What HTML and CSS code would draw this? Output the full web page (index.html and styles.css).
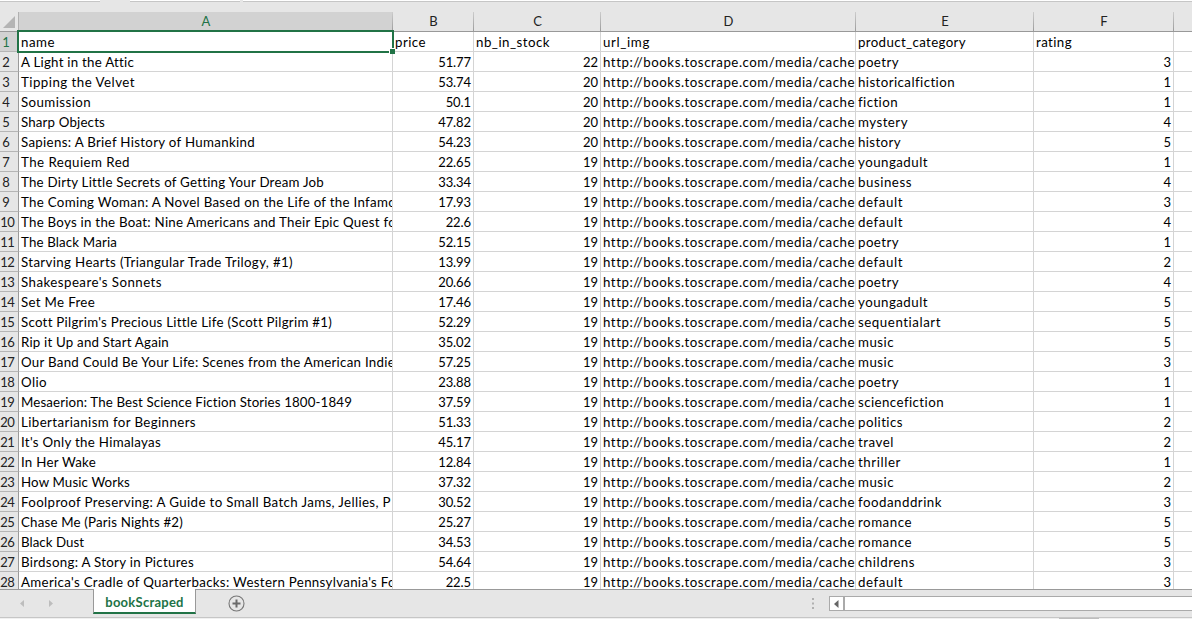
FILE: index.html
```
<!DOCTYPE html>
<html lang="en">
<head>
<meta charset="utf-8">
<title>bookScraped</title>
<link rel="stylesheet" href="styles.css">
</head>
<body>
<div class="app">
  <div class="formula-strip"><span class="name-box"></span><span class="fx-buttons"></span><span class="formula-input"></span></div>
  <div class="sheet">
    <div class="row letters">
      <div class="corner"><svg width="12" height="12" viewBox="0 0 12 12"><path d="M12 0V12H0Z" fill="#b4b4b4"/></svg></div>
      <div class="letter active">A</div><div class="letter">B</div><div class="letter">C</div><div class="letter">D</div><div class="letter">E</div><div class="letter">F</div><div class="letter"></div>
    </div>
    <div class="rows" id="rows"></div>
    <div class="selection"><span class="fill-handle"></span></div>
  </div>
  <div class="tabbar">
    <svg class="nav" width="40" height="9" viewBox="0 0 40 9"><path d="M5 1V8L1 4.500Z M30 1V8L34 4.500Z" fill="#bdbdbd"/></svg>
    <div class="tab">bookScraped</div>
    <svg class="add" width="17" height="17" viewBox="0 0 17 17"><circle cx="8.500" cy="8.500" r="7.500" fill="none" stroke="#777" stroke-width="1.100"/><path d="M8.500 4.500V12.500M4.500 8.500H12.500" stroke="#6a6a6a" stroke-width="2"/></svg>
    <svg class="grip" width="2" height="11" viewBox="0 0 2 11"><path d="M0 0H2V2H0ZM0 4.500H2V6.500H0ZM0 9H2V11H0Z" fill="#b0b0b0"/></svg>
    <div class="scrollbar"><div class="scroll-left"><svg width="5" height="8" viewBox="0 0 5 8"><path d="M4.500 0V8L0 4Z" fill="#666"/></svg></div></div>
  </div>
  <div class="statusbar"><span class="status-mark"></span></div>
</div>
<script src="rows.js"></script>
</body>
</html>
```
FILE: styles.css
```
* { box-sizing: border-box; }
body { margin: 0; font: 13px/20px Lato, "Noto Sans", sans-serif; color: #000; overflow: hidden; }
.app { width: 1192px; height: 619px; display: flex; flex-direction: column; background: #e6e6e6; overflow: hidden; }
.formula-strip { height: 12px; display: flex; align-items: flex-start; flex: none; }
.formula-strip span { height: 2px; background: #fff; border-bottom: 1px solid #c6c6c6; }
.name-box { width: 100px; margin-right: 30px; }
.fx-buttons { width: 110px; margin-right: 3px; }
.formula-input { flex: 1; }
.sheet { position: relative; height: 577px; flex: none; overflow: hidden; background: #fff; }
.row { display: grid; grid-template-columns: 19px 374px 81px 127px 255px 178px 140px 19px; height: 20px; }
.letters { background: #e6e6e6; border-bottom: 1px solid #999; }
.corner { display: flex; justify-content: flex-end; padding: 4px 3px 0 0; border-right: 1px solid #b0b0b0; }
.letter { text-align: center; line-height: 19px; padding-left: 1px; border-right: 1px solid; border-image: linear-gradient(#cfcfcf, #999) 1; color: #222; }
.letter:last-child { border: 0; }
.letter.active { background: #d2d2d2; color: #217346; }
.cell { border-right: 1px solid #d4d4d4; border-bottom: 1px solid #d4d4d4; padding: 0 0 0 2px; line-height: 21px; white-space: nowrap; overflow: hidden; font-size: 13.300px; font-variant-ligatures: none; }
.cell.number { text-align: right; padding-right: 2px; font-size: 13px; letter-spacing: -0.080px; }
.cell.blank { border-right: 0; }
.row-number { background: #e6e6e6; border-right: 1px solid #999; border-bottom: 1px solid #b5b5b5; text-align: right; padding-right: 4px; line-height: 21px; color: #222; letter-spacing: -0.700px; overflow: hidden; }
.row-number.single { padding-right: 9px; }
.row-number.active { background: #d2d2d2; color: #217346; }
.selection { position: absolute; left: 17px; top: 18px; width: 377px; height: 23px; border: 2px solid #217346; }
.fill-handle { position: absolute; right: -3px; bottom: -3px; width: 6px; height: 6px; background: #217346; border-left: 1px solid #fff; border-top: 1px solid #fff; }
.tabbar { height: 28px; flex: none; display: flex; align-items: flex-start; border-top: 1px solid #999; }
.nav { margin: 9px 34px 0 19px; }
.tab { width: 103px; height: 25px; margin-top: -1px; background: #fff; border: 1px solid #999; border-top: 0; border-bottom: 2px solid #217346; color: #217346; font-weight: 700; letter-spacing: 0.250px; text-align: center; line-height: 27px; }
.add { margin: 5px 0 0 32px; }
.grip { margin: 8px 0 0 567px; }
.scrollbar { margin: 6px 0 0 15px; flex: 1; height: 15px; background: #fff; border: 1px solid #aaa; border-right: 0; }
.scroll-left { width: 15px; height: 13px; border-right: 2px solid #aaa; display: flex; align-items: center; justify-content: center; }
.statusbar { height: 2px; border-top: 1px solid #c6c6c6; background: #f0f0f0; display: flex; }
.status-mark { width: 40px; height: 1px; margin-left: 1059px; background: #bdbdbd; }
```
FILE: rows.js
```
// name, width of the name, price, stock, category, rating
const books = [
  ["A Light in the Attic", 113, "51.77", 22, "poetry", 3],
  ["Tipping the Velvet", 114, "53.74", 20, "historicalfiction", 1],
  ["Soumission", 70, "50.1", 20, "fiction", 1],
  ["Sharp Objects", 84, "47.82", 20, "mystery", 4],
  ["Sapiens: A Brief History of Humankind", 234, "54.23", 20, "history", 5],
  ["The Requiem Red", 109, "22.65", 19, "youngadult", 1],
  ["The Dirty Little Secrets of Getting Your Dream Job", 303, "33.34", 19, "business", 4],
  ["The Coming Woman: A Novel Based on the Life of the Infamo", 375, "17.93", 19, "default", 3],
  ["The Boys in the Boat: Nine Americans and Their Epic Quest fo", 375, "22.6", 19, "default", 4],
  ["The Black Maria", 96, "52.15", 19, "poetry", 1],
  ["Starving Hearts (Triangular Trade Trilogy, #1)", 272, "13.99", 19, "default", 2],
  ["Shakespeare's Sonnets", 141, "20.66", 19, "poetry", 4],
  ["Set Me Free", 74, "17.46", 19, "youngadult", 5],
  ["Scott Pilgrim's Precious Little Life (Scott Pilgrim #1)", 311, "52.29", 19, "sequentialart", 5],
  ["Rip it Up and Start Again", 148, "35.02", 19, "music", 5],
  ["Our Band Could Be Your Life: Scenes from the American Indie", 374, "57.25", 19, "music", 3],
  ["Olio", 26, "23.88", 19, "poetry", 1],
  ["Mesaerion: The Best Science Fiction Stories 1800-1849", 331, "37.59", 19, "sciencefiction", 1],
  ["Libertarianism for Beginners", 175, "51.33", 19, "politics", 2],
  ["It's Only the Himalayas", 140, "45.17", 19, "travel", 2],
  ["In Her Wake", 75, "12.84", 19, "thriller", 1],
  ["How Music Works", 109, "37.32", 19, "music", 2],
  ["Foolproof Preserving: A Guide to Small Batch Jams, Jellies, P", 370, "30.52", 19, "foodanddrink", 3],
  ["Chase Me (Paris Nights #2)", 162, "25.27", 19, "romance", 5],
  ["Black Dust", 63, "34.53", 19, "romance", 5],
  ["Birdsong: A Story in Pictures", 173, "54.64", 19, "childrens", 3],
  ["America's Cradle of Quarterbacks: Western Pennsylvania's Fo", 375, "22.5", 19, "default", 3]
];

const url = "http://books.toscrape.com/media/cache";
const widths = {
  [url]: 252, name: 34, price: 31, nb_in_stock: 74, url_img: 47, product_category: 108, rating: 36,
  poetry: 41, historicalfiction: 97, fiction: 40, mystery: 50, history: 43, youngadult: 70,
  business: 54, default: 45, sequentialart: 83, music: 36, sciencefiction: 86, politics: 45,
  travel: 36, thriller: 43, foodanddrink: 84, romance: 54, childrens: 57
};

const container = document.getElementById("rows");

// Spreads the letters so that the text takes up its column-text width.
function fit(cell, width) {
  const range = document.createRange();
  range.selectNodeContents(cell);
  const extra = width - range.getBoundingClientRect().width;
  cell.style.letterSpacing = (extra / cell.textContent.length).toFixed(3) + "px";
}

function addRow(number, values, isHeader) {
  const row = document.createElement("div");
  row.className = "row";
  container.append(row);
  const add = (className, text) => {
    const cell = document.createElement("div");
    cell.className = className;
    cell.textContent = text;
    row.append(cell);
    if (widths[text]) fit(cell, widths[text]);
  };
  add("row-number" + (number < 10 ? " single" : "") + (isHeader ? " active" : ""), number);
  const kinds = ["name", "number", "number", "url", "category", "number"];
  values.forEach((value, i) => add("cell " + (isHeader ? "heading" : kinds[i]), value));
  add("cell blank", "");
}

addRow(1, ["name", "price", "nb_in_stock", "url_img", "product_category", "rating"], true);
books.forEach(([name, width, price, stock, category, rating], i) => {
  widths[name] = width;
  addRow(i + 2, [name, price, stock, url, category, rating], false);
});
```
